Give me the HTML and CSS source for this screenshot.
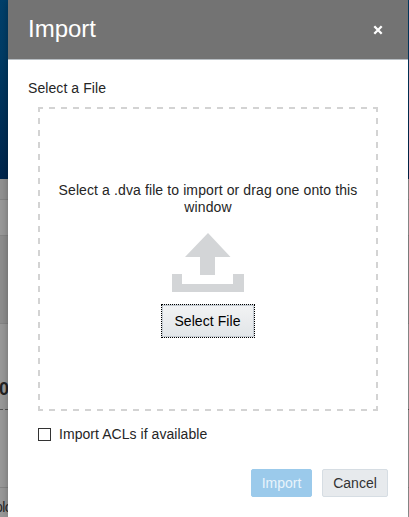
FILE: index.html
```html
<!DOCTYPE html>
<html lang="en">
<head>
<meta charset="utf-8">
<title>Import</title>
<link rel="stylesheet" href="styles.css">
</head>
<body>
<div class="backdrop" aria-hidden="true">
  <div class="banner"></div>
  <div class="strip strip-a"></div>
  <div class="strip strip-b"></div>
  <div class="strip strip-c"></div>
  <div class="strip strip-d"><b>0</b></div>
  <div class="strip strip-e"></div>
  <div class="strip strip-f">plo</div>
</div>
<main class="dialog">
  <header class="header">
    <h1>Import</h1>
    <svg class="close" width="10" height="10" viewBox="0 0 10 10"><path d="M1.3 1.3 8.7 8.7M8.7 1.3 1.3 8.7" stroke="#fff" stroke-width="2.3"/></svg>
  </header>
  <section class="body">
    <div class="label">Select a File</div>
    <div class="drop">
      <p>Select a .dva file to import or drag one onto this window</p>
      <svg class="upload" width="72" height="60" viewBox="0 0 72 60"><path fill="#d3d5d7" d="M36 0 58.5 24H43V42H28V24H13ZM0 41H10V51H61V41H72V59H0Z"/></svg>
      <button class="select" type="button">Select File</button>
    </div>
    <label class="check"><span class="box"></span>Import ACLs if available</label>
    <footer class="actions">
      <button class="btn primary" type="button">Import</button>
      <button class="btn" type="button">Cancel</button>
    </footer>
  </section>
</main>
</body>
</html>
```
FILE: styles.css
```css
* { box-sizing: border-box; }
body {
  margin: 0;
  width: 409px;
  height: 517px;
  overflow: hidden;
  display: grid;
  font: 14px/17px "Liberation Sans", Arial, sans-serif;
  color: #252525;
}
.backdrop, .dialog { grid-area: 1 / 1; }
.backdrop {
  height: 517px;
  background: #999;
}
.banner {
  height: 179px;
  background: linear-gradient(#00406b, #003c66 30%, #00264d);
}
.strip { border-bottom: 1px solid #858585; }
.strip-a { height: 21px; background: #929292; }
.strip-b { height: 36px; }
.strip-c { height: 88px; background: #8e8e8e; }
.strip-d { height: 86px; border-bottom: 1px dashed #555; padding-top: 55px; }
.strip-d b { font-size: 18px; line-height: 20px; margin-left: -1px; color: #222; }
.strip-e { height: 78px; }
.strip-f { border: 0; padding-top: 11px; text-indent: -5px; letter-spacing: -.6px; }
.dialog {
  z-index: 1;
  margin-left: 8px;
  width: 400px;
  height: 517px;
  background: #fff;
  box-shadow: 0 0 8px rgba(0, 0, 0, .3);
}
.header {
  height: 60px;
  padding: 0 25px 0 20px;
  background: #737373;
  border-bottom: 1px solid #b8bec3;
  display: flex;
  align-items: center;
  justify-content: space-between;
}
h1 {
  margin: 0 0 2px;
  font-size: 24px;
  font-weight: 400;
  line-height: 28px;
  color: #fff;
}
.body { padding: 20px 20px 0; }
.label { height: 27px; letter-spacing: .08px; }
.drop {
  --x: repeating-linear-gradient(90deg, #d3d3d3 0 5px, transparent 5px 11px, #d3d3d3 11px 12px);
  --y: repeating-linear-gradient(#d3d3d3 0 5px, transparent 5px 11px, #d3d3d3 11px 12px);
  height: 304px;
  width: 340px;
  margin-left: 10px;
  padding: 75px 17px 0;
  display: flex;
  flex-direction: column;
  align-items: center;
  text-align: center;
  background: var(--x) top / 100% 2px no-repeat, var(--x) bottom / 100% 2px no-repeat,
    var(--y) left / 2px 100% no-repeat, var(--y) right / 2px 100% no-repeat;
}
.drop p { margin: 0; letter-spacing: .11px; }
.upload { margin-top: 17px; }
button { font: inherit; color: inherit; padding: 0; }
.select {
  width: 94px;
  height: 34px;
  margin: 11px 0 0 -1px;
  color: #000;
  letter-spacing: .08px;
  border: 1px dotted #000;
  background: linear-gradient(#f2f3f4, #e1e5e8);
  box-shadow: inset 0 0 0 1px #c5ccd3;
}
.check {
  display: flex;
  align-items: center;
  height: 17px;
  margin: 15px 0 0 10px;
  letter-spacing: .05px;
}
.box {
  width: 13px;
  height: 13px;
  margin-right: 8px;
  border: 1px solid #333;
}
.actions {
  display: flex;
  justify-content: flex-end;
  gap: 10px;
  margin-top: 26px;
}
.btn {
  width: 66px;
  height: 28px;
  border: 1px solid #d6dde3;
  border-radius: 2px;
  background: #e7eaed;
  color: #333;
}
.primary {
  width: 61px;
  border-color: #9bcaeb;
  background: #9bcaeb;
  color: #e9f4fb;
}
```
